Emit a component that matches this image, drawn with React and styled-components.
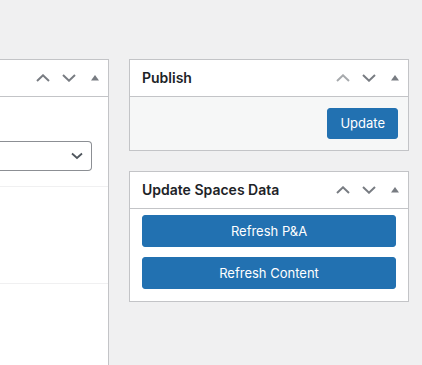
import React from "react";
import styled, { createGlobalStyle } from "styled-components";

const Global = createGlobalStyle`
  html, body { margin: 0; padding: 0; background: #f0f0f1; }
  body {
    font-family: Inter, Roboto, "Noto Sans", "Liberation Sans", sans-serif;
    color: #1d2327;
    overflow: hidden;
  }
`;

const Page = styled.div`
  display: flex;
  align-items: flex-start;
  gap: 20px;
  padding-top: 59px;
  height: 365px;
  box-sizing: border-box;
`;

const MainColumn = styled.div`
  width: 109px;
  flex: none;
  height: 306px;
  background: #fff;
  border: 1px solid #c3c4c7;
  border-left: none;
  border-bottom: none;
  box-sizing: border-box;
`;

const Side = styled.div`
  width: 280px;
  flex: none;
  display: flex;
  flex-direction: column;
  gap: 20px;
`;

const Box = styled.div`
  background: #fff;
  border: 1px solid #c3c4c7;
`;

const Header = styled.div`
  height: 36px;
  display: flex;
  align-items: center;
  border-bottom: 1px solid #c3c4c7;
`;

const Title = styled.h2`
  flex: 1;
  margin: 0;
  padding: 0 12px;
  font-size: 14px;
  font-weight: 600;
  line-height: 1.4;
`;

const Actions = styled.div`
  display: flex;
  margin-left: auto;
`;

const HandleBtn = styled.button`
  width: 26px;
  height: 36px;
  padding: 0;
  border: 0;
  background: none;
  display: flex;
  align-items: center;
  justify-content: center;
  color: ${(p) => (p.$disabled ? "#a7aaad" : "#787c82")};
`;

const Chevron = ({ up }) => (
  <svg width="14" height="8" viewBox="0 0 14 8">
    <path
      d={up ? "M1 7 L7 1.3 L13 7" : "M1 1 L7 6.7 L13 1"}
      fill="none"
      stroke="currentColor"
      strokeWidth="2"
    />
  </svg>
);

const Tri = () => (
  <svg width="8" height="6" viewBox="0 0 8 6">
    <path d="M4 0 L8 5.5 L0 5.5 Z" fill="currentColor" />
  </svg>
);

const HandleActions = ({ upDisabled }) => (
  <Actions>
    <HandleBtn $disabled={upDisabled}>
      <Chevron up />
    </HandleBtn>
    <HandleBtn>
      <Chevron />
    </HandleBtn>
    <HandleBtn>
      <Tri />
    </HandleBtn>
  </Actions>
);

const MainBody = styled.div`
  display: flex;
  flex-direction: column;
`;

const SelectRow = styled.div`
  padding: 44px 16px 0 0;
  height: 90px;
  box-sizing: border-box;
  border-bottom: 1px solid #f0f0f1;
`;

const Select = styled.div`
  height: 30px;
  box-sizing: border-box;
  border: 1px solid #8c8f94;
  border-left: none;
  border-radius: 0 4px 4px 0;
  background: #fff;
  display: flex;
  align-items: center;
  justify-content: flex-end;
  padding-right: 8px;
  color: #50575e;
`;

const EmptyRow = styled.div`
  height: 96px;
  border-bottom: 1px solid #f0f0f1;
`;

const PublishBody = styled.div`
  background: #f6f7f7;
  padding: 11px 10px;
  display: flex;
  justify-content: flex-end;
`;

const Button = styled.button`
  font-family: inherit;
  font-size: 13px;
  line-height: 1;
  color: #fff;
  background: #2271b1;
  border: 1px solid #2271b1;
  border-radius: 3px;
  height: ${(p) => (p.$tall ? "32px" : "31px")};
  padding: 0 12px;
  width: ${(p) => (p.$block ? "100%" : "auto")};
  cursor: pointer;
`;

const SpacesBody = styled.div`
  padding: 6px 12px 12px;
  display: flex;
  flex-direction: column;
  gap: 10px;
`;

export default function App() {
  return (
    <>
      <Global />
      <Page>
        <MainColumn>
          <Header>
            <Title />
            <HandleActions />
          </Header>
          <MainBody>
            <SelectRow>
              <Select>
                <svg width="12" height="8" viewBox="0 0 12 8">
                  <path d="M1 1.5 L6 6 L11 1.5" fill="none" stroke="currentColor" strokeWidth="1.8" />
                </svg>
              </Select>
            </SelectRow>
            <EmptyRow />
          </MainBody>
        </MainColumn>
        <Side>
          <Box>
            <Header>
              <Title>Publish</Title>
              <HandleActions upDisabled />
            </Header>
            <PublishBody>
              <Button>Update</Button>
            </PublishBody>
          </Box>
          <Box>
            <Header>
              <Title>Update Spaces Data</Title>
              <HandleActions />
            </Header>
            <SpacesBody>
              <Button $block $tall>Refresh P&amp;A</Button>
              <Button $block $tall>Refresh Content</Button>
            </SpacesBody>
          </Box>
        </Side>
      </Page>
    </>
  );
}
